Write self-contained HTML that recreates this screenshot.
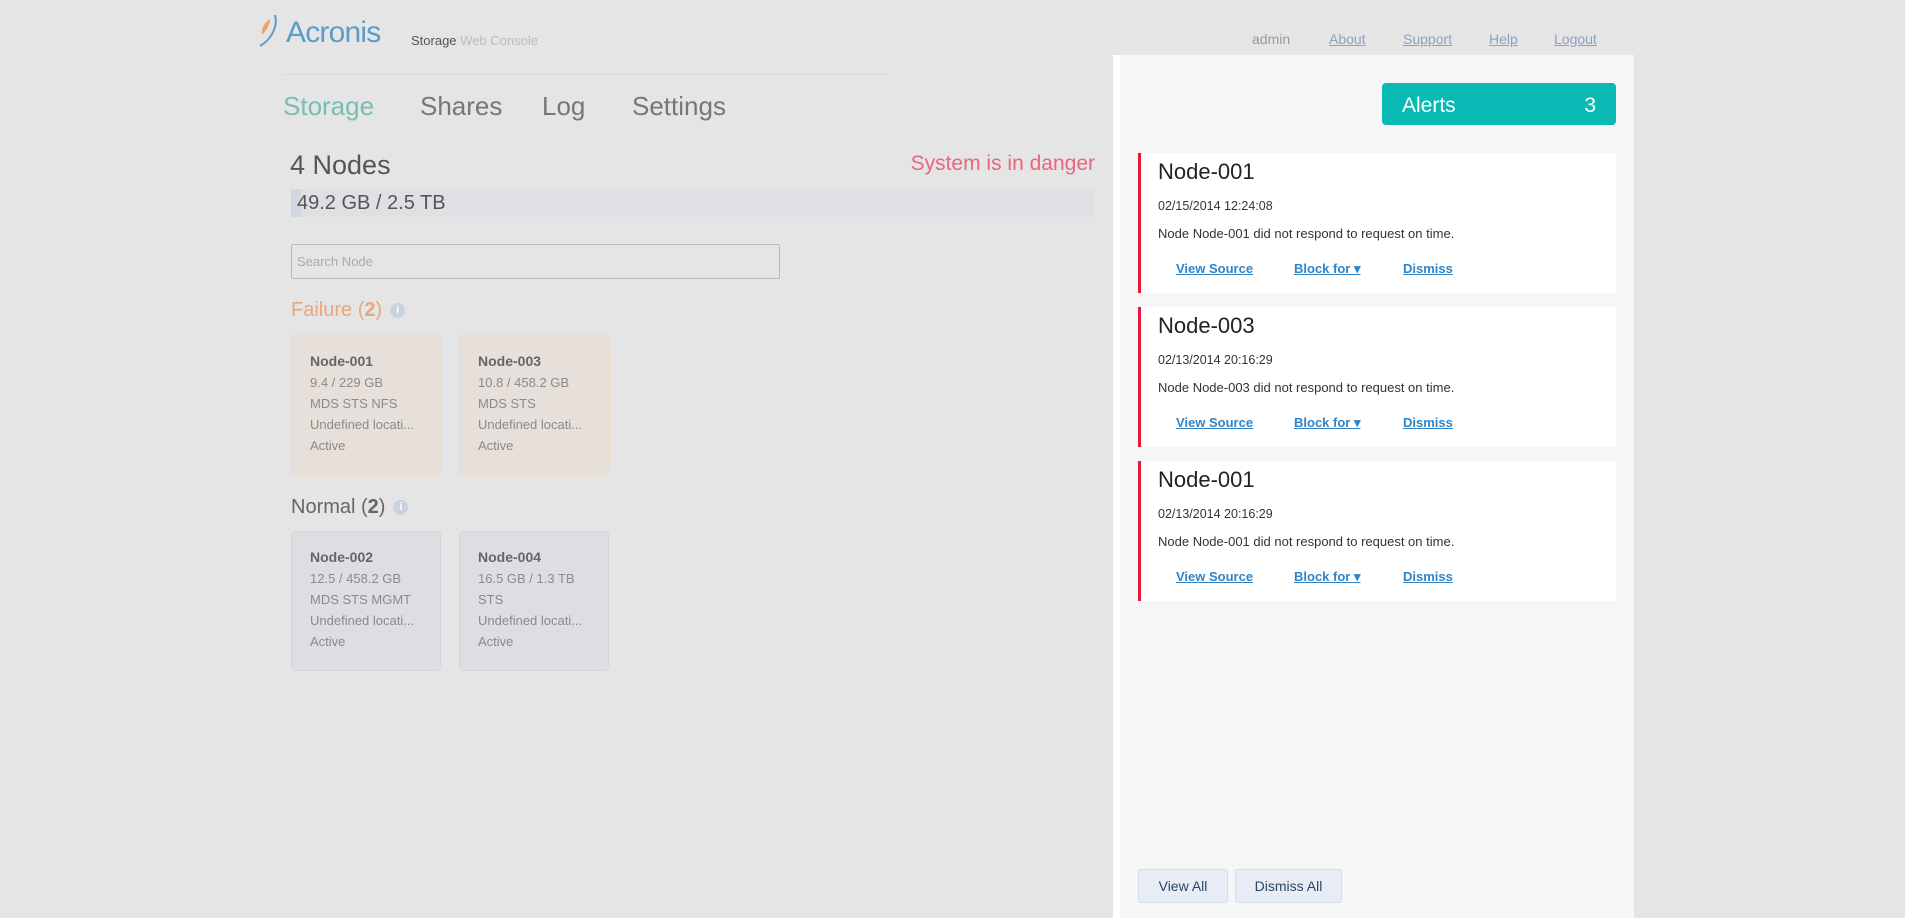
<!DOCTYPE html>
<html><head><meta charset="utf-8"><style>
*{margin:0;padding:0;box-sizing:border-box}
body{width:1905px;height:918px;background:#e5e5e5;font-family:"Liberation Sans",sans-serif;position:relative;overflow:hidden;color:#555}
.a{position:absolute;white-space:nowrap}
.top a{color:#8aa2c2;text-decoration:underline;font-size:14px}
.nav{font-size:26px;color:#777;top:91px}
.card{position:absolute;width:150px;height:140px;border-radius:4px;font-size:13px;color:#8a8a8a;padding:15px 0 0 18px;line-height:21px}
.card b{color:#666;font-size:14px}
.f{background:#e7e0da;border:1px solid #eddccb}
.n{background:#dcdee2;border:1px solid #d4d8de}
.al{position:absolute;left:1138px;width:478px;height:140px;background:#fff;border-left:3px solid #e8183a}
.al h3{position:absolute;left:17px;top:6px;font-weight:normal;font-size:22px;color:#222}
.al .d{position:absolute;left:17px;top:46px;font-size:12.5px;color:#333}
.al .m{position:absolute;left:17px;top:73px;font-size:13px;color:#333}
.al .l{position:absolute;top:108px;font-size:13px;font-weight:bold;color:#2f85c8;text-decoration:underline}
.btn{position:absolute;top:869px;height:34px;background:#e8edf5;border:1px solid #d5dde9;border-radius:3px;font-size:14px;color:#2b4466;text-align:center;line-height:32px}
.info{display:inline-block;width:15px;height:15px;border-radius:50%;background:#c9d2de;color:#fff;font-size:11px;line-height:15px;text-align:center;font-weight:bold;vertical-align:middle;margin-left:8px}
</style></head><body>
<svg class="a" style="left:258px;top:14px" width="26" height="34" viewBox="0 0 26 34"><path d="M12 5 C6 9 3 15 4 21 C8 17 12 11 12 5Z" fill="#e8a56f"/><path d="M17 1 C20 12 14 25 2 32" stroke="#5a9cc9" stroke-width="2" fill="none"/></svg>
<div class="a" style="left:286px;top:16px;font-size:30px;color:#5b9dc8;letter-spacing:-0.8px">Acronis</div>
<div class="a" style="left:411px;top:33px;font-size:13px;color:#555">Storage <span style="color:#bbb">Web Console</span></div>
<div class="a" style="left:283px;top:74px;width:605px;height:1px;background:#d8d8d8"></div>
<div class="a nav" style="left:283px;color:#76bfb2">Storage</div>
<div class="a nav" style="left:420px">Shares</div>
<div class="a nav" style="left:542px">Log</div>
<div class="a nav" style="left:632px">Settings</div>
<div class="a" style="left:290px;top:150px;font-size:27px;color:#555">4 Nodes</div>
<div class="a" style="right:810px;top:152px;font-size:21px;color:#e7677f">System is in danger</div>
<div class="a" style="left:291px;top:189px;width:804px;height:28px;background:#dfe0e3"></div>
<div class="a" style="left:291px;top:189px;width:10px;height:28px;background:#d3d8e0"></div>
<div class="a" style="left:297px;top:192px;font-size:20px;color:#555">49.2 GB / 2.5 TB</div>
<div class="a" style="left:291px;top:244px;width:489px;height:35px;border:1px solid #bbb;border-radius:2px;background:#e5e5e5;font-size:13px;color:#aaa;padding:9px 0 0 5px">Search Node</div>
<div class="a" style="left:291px;top:299px;font-size:20px;color:#e8a77c">Failure (<b style="font-weight:bold">2</b>)<span class="info">i</span></div>
<div class="card f" style="left:291px;top:335px"><b>Node-001</b><br>9.4 / 229 GB<br>MDS STS NFS<br>Undefined locati...<br>Active</div>
<div class="card f" style="left:459px;top:335px"><b>Node-003</b><br>10.8 / 458.2 GB<br>MDS STS<br>Undefined locati...<br>Active</div>
<div class="a" style="left:291px;top:496px;font-size:20px;color:#666">Normal (<b>2</b>)<span class="info">i</span></div>
<div class="card n" style="left:291px;top:531px"><b>Node-002</b><br>12.5 / 458.2 GB<br>MDS STS MGMT<br>Undefined locati...<br>Active</div>
<div class="card n" style="left:459px;top:531px"><b>Node-004</b><br>16.5 GB / 1.3 TB<br>STS<br>Undefined locati...<br>Active</div>
<div class="a top" style="left:1252px;top:31px;font-size:14px;color:#999">admin</div>
<div class="a top" style="left:1329px;top:31px"><a>About</a></div>
<div class="a top" style="left:1403px;top:31px"><a>Support</a></div>
<div class="a top" style="left:1489px;top:31px"><a>Help</a></div>
<div class="a top" style="left:1554px;top:31px"><a>Logout</a></div>
<div class="a" style="left:1113px;top:55px;width:521px;height:863px;background:#f6f6f6;border-left:7px solid #fff"></div>
<div class="a" style="left:1382px;top:83px;width:234px;height:42px;background:#08bab3;border-radius:4px;color:#fff;font-size:21px;padding:11px 20px 0 20px">Alerts<span style="float:right">3</span></div>
<div class="al" style="top:153px"><h3>Node-001</h3><div class="d">02/15/2014 12:24:08</div><div class="m">Node Node-001 did not respond to request on time.</div><span class="l" style="left:35px">View Source</span><span class="l" style="left:153px">Block for ▾</span><span class="l" style="left:262px">Dismiss</span></div>
<div class="al" style="top:307px"><h3>Node-003</h3><div class="d">02/13/2014 20:16:29</div><div class="m">Node Node-003 did not respond to request on time.</div><span class="l" style="left:35px">View Source</span><span class="l" style="left:153px">Block for ▾</span><span class="l" style="left:262px">Dismiss</span></div>
<div class="al" style="top:461px"><h3>Node-001</h3><div class="d">02/13/2014 20:16:29</div><div class="m">Node Node-001 did not respond to request on time.</div><span class="l" style="left:35px">View Source</span><span class="l" style="left:153px">Block for ▾</span><span class="l" style="left:262px">Dismiss</span></div>
<div class="btn" style="left:1138px;width:90px">View All</div>
<div class="btn" style="left:1235px;width:107px">Dismiss All</div>
</body></html>
